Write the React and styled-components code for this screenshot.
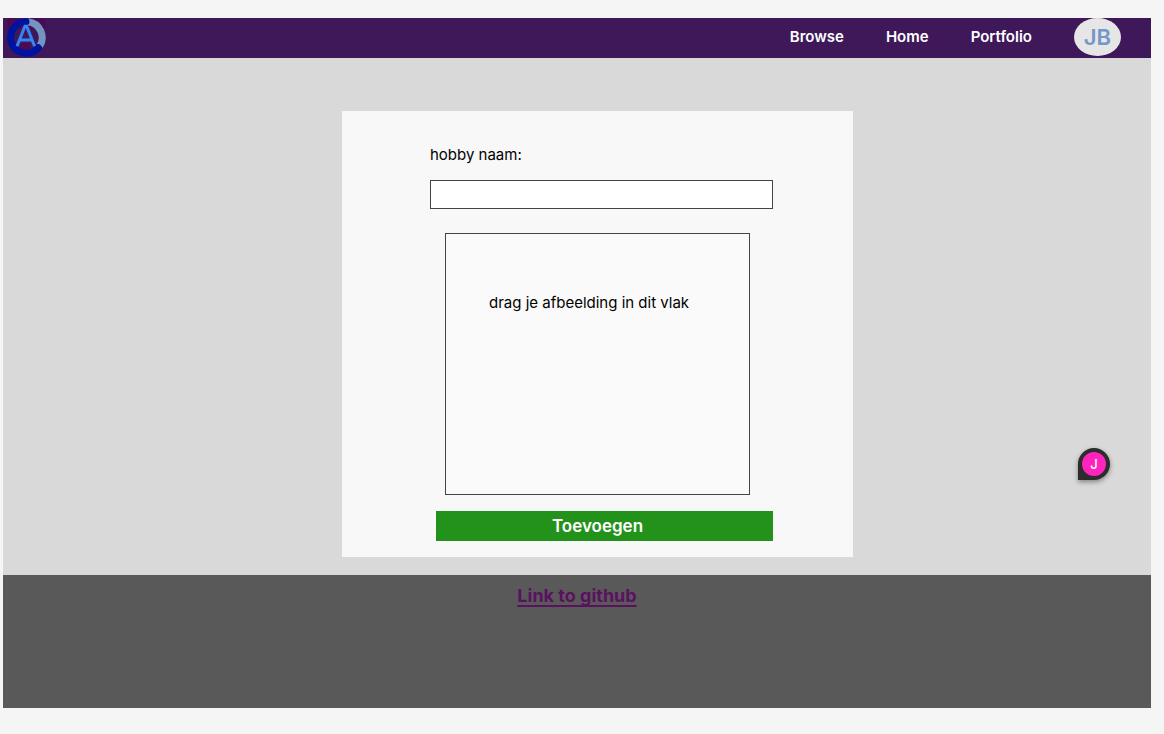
import React from "react";
import styled, { createGlobalStyle } from "styled-components";

const GlobalStyle = createGlobalStyle`
  *, *::before, *::after { box-sizing: border-box; }
  body {
    margin: 0;
    background: #f5f5f5;
    color: #000;
    font-family: Inter, "Liberation Sans", sans-serif;
    font-size: 15px;
    line-height: 20px;
  }
`;

const Page = styled.div`
  display: flex;
  flex-direction: column;
  min-height: 100vh;
  padding: 18px 13px 26px 3px;
`;

const Header = styled.header`
  display: flex;
  align-items: center;
  justify-content: space-between;
  height: 40px;
  padding: 0 30px 0 3px;
  background: #3e1859;
`;

const LogoLink = styled.a`
  display: block;
  height: 40px;
`;

const Nav = styled.nav`
  display: flex;
  align-items: center;
  gap: 42px;
  height: 38px;
  margin-bottom: 2px;
`;

const NavLink = styled.a`
  color: #fff;
  font-weight: 600;
  text-decoration: none;
`;

const Avatar = styled.a`
  display: flex;
  align-items: center;
  justify-content: center;
  width: 47px;
  height: 38px;
  border-radius: 50%;
  background: #e6e6e6;
  color: #7397c8;
  font-size: 22px;
  font-weight: 600;
  text-decoration: none;
`;

const Main = styled.main`
  display: flex;
  flex: 1;
  align-items: flex-start;
  justify-content: center;
  padding: 53px 0 17px 41px;
  background: #d9d9d9;
`;

const Card = styled.form`
  display: flex;
  flex-direction: column;
  width: 100%;
  max-width: 511px;
  padding: 34px 80px 16px 88px;
  background: #f8f8f8;
`;

const Label = styled.label`
  margin-bottom: 15px;
`;

const TextInput = styled.input`
  width: 100%;
  height: 29px;
  margin-bottom: 24px;
  padding: 0 8px;
  border: 1px solid #444;
  border-radius: 0;
  background: #fff;
  font: inherit;
`;

const DropZone = styled.section`
  height: 262px;
  margin: 0 23px 16px 15px;
  padding: 59px 43px;
  border: 1px solid #444;
  background: #fafafa;
  white-space: nowrap;
`;

const SubmitButton = styled.button`
  height: 30px;
  margin-left: 6px;
  padding: 0 14px 0 0;
  border: 0;
  background: #23921a;
  color: #fff;
  font: inherit;
  font-size: 17px;
  font-weight: 600;
  cursor: pointer;
`;

const Footer = styled.footer`
  display: flex;
  align-items: flex-start;
  justify-content: center;
  height: 133px;
  padding-top: 11px;
  background: #595959;
`;

const FooterLink = styled.a`
  color: #5a1260;
  font-size: 18px;
  font-weight: 700;
  text-decoration-color: #5a1260;
  text-underline-offset: 3px;
  text-decoration-thickness: 2px;
  text-decoration-skip-ink: none;
`;

const CommentPin = styled.button`
  position: fixed;
  right: 54px;
  bottom: 254px;
  display: flex;
  align-items: center;
  justify-content: center;
  width: 32px;
  height: 32px;
  padding: 0;
  border: 0;
  border-radius: 50% 50% 50% 0;
  background: #2c2c2c;
  box-shadow: 0 2px 5px rgba(0, 0, 0, 0.4);
  cursor: pointer;
`;

const PinInitial = styled.span`
  width: 24px;
  height: 24px;
  border-radius: 50%;
  background: #ff24bd;
  color: #fff;
  font-family: Inter, "Liberation Sans", sans-serif;
  font-size: 13px;
  font-weight: 500;
  line-height: 24px;
  text-align: center;
`;

function Logo() {
  return (
    <svg width="40" height="40" viewBox="0 0 40 40" aria-hidden="true">
      <path d="M1.3 0.5H39.5V10.5H1.3Z M14.5 25H24V31H14.5Z" fill="#4c0a55" />
      <path d="M22 3.7A16 16 0 0 1 33.8 28" fill="none" stroke="#7295c2" strokeWidth="7" />
      <path
        d="M20 3.7A15.8 15.8 0 1 0 32.4 29.8"
        fill="none"
        stroke="#0012a0"
        strokeWidth="7"
        strokeLinecap="round"
      />
      <path
        d="M11 28.2L18.9 8.2H20.7L28.6 28.2M13.5 22H26"
        fill="none"
        stroke="#3585f5"
        strokeWidth="3"
      />
    </svg>
  );
}

export default function App() {
  return (
    <>
      <GlobalStyle />
      <Page>
        <Header>
          <LogoLink href="#home" aria-label="Home">
            <Logo />
          </LogoLink>
          <Nav>
            <NavLink href="#browse">Browse</NavLink>
            <NavLink href="#home">Home</NavLink>
            <NavLink href="#portfolio">Portfolio</NavLink>
            <Avatar href="#profile">JB</Avatar>
          </Nav>
        </Header>
        <Main>
          <Card onSubmit={(event) => event.preventDefault()}>
            <Label htmlFor="hobby-name">hobby naam:</Label>
            <TextInput id="hobby-name" type="text" />
            <DropZone>drag je afbeelding in dit vlak</DropZone>
            <SubmitButton type="submit">Toevoegen</SubmitButton>
          </Card>
        </Main>
        <Footer>
          <FooterLink href="#github">Link to github</FooterLink>
        </Footer>
      </Page>
      <CommentPin type="button">
        <PinInitial>J</PinInitial>
      </CommentPin>
    </>
  );
}
